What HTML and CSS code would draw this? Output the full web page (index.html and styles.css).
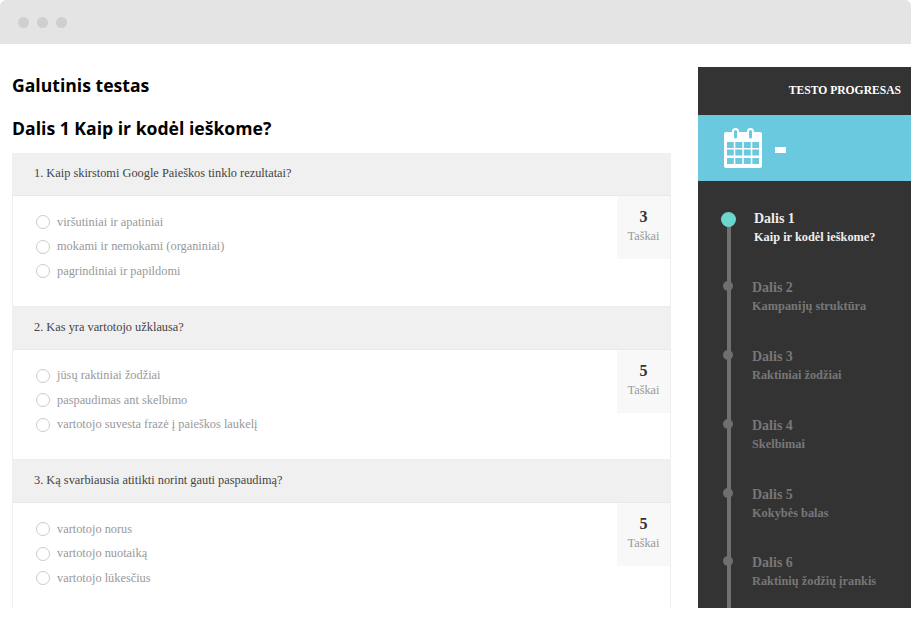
FILE: index.html
```html
<!DOCTYPE html>
<html lang="lt">
<head>
<meta charset="utf-8">
<title>Galutinis testas</title>
<link rel="stylesheet" href="styles.css">
</head>
<body>
<div class="window">
  <header class="chrome">
    <span class="dot"></span><span class="dot"></span><span class="dot"></span>
  </header>
  <div class="page">
    <main class="main">
      <h1 class="title">Galutinis testas</h1>
      <h2 class="subtitle">Dalis 1 Kaip ir kodėl ieškome?</h2>
      <section class="question">
        <div class="q-head">1. Kaip skirstomi Google Paieškos tinklo rezultatai?</div>
        <div class="q-body">
          <ul class="options">
            <li class="option"><span class="radio"></span>viršutiniai ir apatiniai</li>
            <li class="option"><span class="radio"></span>mokami ir nemokami (organiniai)</li>
            <li class="option"><span class="radio"></span>pagrindiniai ir papildomi</li>
          </ul>
          <div class="score"><b class="score-num">3</b><span class="score-label">Taškai</span></div>
        </div>
      </section>
      <section class="question">
        <div class="q-head">2. Kas yra vartotojo užklausa?</div>
        <div class="q-body">
          <ul class="options">
            <li class="option"><span class="radio"></span>jūsų raktiniai žodžiai</li>
            <li class="option"><span class="radio"></span>paspaudimas ant skelbimo</li>
            <li class="option"><span class="radio"></span>vartotojo suvesta frazė į paieškos laukelį</li>
          </ul>
          <div class="score"><b class="score-num">5</b><span class="score-label">Taškai</span></div>
        </div>
      </section>
      <section class="question">
        <div class="q-head">3. Ką svarbiausia atitikti norint gauti paspaudimą?</div>
        <div class="q-body">
          <ul class="options">
            <li class="option"><span class="radio"></span>vartotojo norus</li>
            <li class="option"><span class="radio"></span>vartotojo nuotaiką</li>
            <li class="option"><span class="radio"></span>vartotojo lūkesčius</li>
          </ul>
          <div class="score"><b class="score-num">5</b><span class="score-label">Taškai</span></div>
        </div>
      </section>
    </main>
    <aside class="side">
      <div class="side-head">TESTO PROGRESAS</div>
      <div class="side-band">
        <svg class="cal" width="38" height="40" viewBox="0 0 38 40">
          <path fill="#fff" fill-rule="evenodd" d="M2 4h6V3.5a3.5 3.5 0 0 1 7 0V4h8V3.5a3.5 3.5 0 0 1 7 0V4h6a2 2 0 0 1 2 2v32a2 2 0 0 1-2 2H2a2 2 0 0 1-2-2V6a2 2 0 0 1 2-2zM10 3.5V9a1.5 1.5 0 0 0 3 0V3.5a1.5 1.5 0 0 0-3 0zM25 3.5V9a1.5 1.5 0 0 0 3 0V3.5a1.5 1.5 0 0 0-3 0zM3 14v6h6.8v-6zM11.3 14v6h7v-6zM19.8 14v6h7v-6zM28.3 14v6h6.7v-6zM3 21.5v6h6.8v-6zM11.3 21.5v6h7v-6zM19.8 21.5v6h7v-6zM28.3 21.5v6h6.7v-6zM3 30v6h6.8v-6zM11.3 30v6h7v-6zM19.8 30v6h7v-6zM28.3 30v6h6.7v-6z"/>
        </svg>
        <span class="dash"></span>
      </div>
      <ol class="steps">
        <li class="step current"><span class="step-title">Dalis 1</span><span class="step-sub">Kaip ir kodėl ieškome?</span></li>
        <li class="step"><span class="step-title">Dalis 2</span><span class="step-sub">Kampanijų struktūra</span></li>
        <li class="step"><span class="step-title">Dalis 3</span><span class="step-sub">Raktiniai žodžiai</span></li>
        <li class="step"><span class="step-title">Dalis 4</span><span class="step-sub">Skelbimai</span></li>
        <li class="step"><span class="step-title">Dalis 5</span><span class="step-sub">Kokybės balas</span></li>
        <li class="step"><span class="step-title">Dalis 6</span><span class="step-sub">Raktinių žodžių įrankis</span></li>
      </ol>
    </aside>
  </div>
</div>
</body>
</html>
```
FILE: styles.css
```css
* { box-sizing: border-box; }
html, body { margin: 0; padding: 0; background: #fff; }
.window { width: 911px; height: 608px; overflow: hidden; font-family: "Liberation Serif", serif; }
.chrome { height: 44px; background: #e4e4e4; border-radius: 6px 6px 0 0; display: flex; align-items: center; gap: 8px; padding: 0 0 0 18px; }
.dot { width: 11px; height: 11px; border-radius: 50%; background: #cfcfcf; }
.page { display: flex; align-items: flex-start; height: 564px; overflow: hidden; }
.main { width: 671px; margin-right: 27px; padding: 29px 0 0 12px; flex: none; }
.title { font: 700 17.6px/25px "Open Sans", sans-serif; color: #000; margin: 0; }
.subtitle { font: 700 17.6px/25px "Open Sans", sans-serif; color: #000; margin: 18px 0 12px; }
.question { border: solid #eee; border-width: 0 1px 1px; }
.q-head { height: 43px; margin: 0 -1px; background: #f0f0f0; border-bottom: 1px solid #e9e9e9; padding: 0 0 0 22px; font-size: 12.35px; line-height: 40px; color: #444; }
.q-body { height: 109.5px; display: flex; justify-content: space-between; align-items: flex-start; }
.options { list-style: none; margin: 0; padding: 14px 0 0 23px; }
.option { display: flex; align-items: center; height: 24.6px; font-size: 12.35px; color: #999; }
.radio { width: 14px; height: 14px; border: 1px solid #ccc; border-radius: 50%; margin-right: 7px; background: #fff; }
.score { width: 53px; height: 63px; background: #f8f8f8; display: flex; flex-direction: column; align-items: center; padding-top: 11px; }
.score-num { font-size: 16px; line-height: 20px; color: #333; }
.score-label { font-size: 12.35px; line-height: 18px; color: #999; }
.side { width: 213px; flex: none; height: 541px; margin-top: 23px; background: #333; }
.side-head { height: 48px; text-align: right; padding: 16px 10px 0 0; font-size: 11.6px; line-height: 15px; font-weight: 700; color: #fff; }
.side-band { height: 66px; background: #6bc9df; display: flex; align-items: center; padding-left: 26px; }
.cal { display: block; margin-top: -1px; }
.dash { width: 11px; height: 6px; background: #fff; margin: 3px 0 0 13px; }
.steps { list-style: none; margin: 0; padding: 28px 0 0 54px; position: relative; }
.steps::before { content: ""; position: absolute; left: 29px; top: 32px; bottom: -60px; width: 4px; background: #6f6f6f; }
.step { height: 68.9px; position: relative; display: flex; flex-direction: column; color: #777; font-weight: 700; }
.step::before { content: ""; position: absolute; left: -29px; top: 3px; width: 10px; height: 10px; border-radius: 50%; background: #6f6f6f; }
.step-title { font-size: 14px; line-height: 19px; }
.step-sub { font-size: 12.35px; line-height: 18px; }
.current { color: #eee; padding-left: 2px; }
.current::before { left: -31px; top: 3px; width: 15px; height: 15px; background: #6ad6cd; }
```
